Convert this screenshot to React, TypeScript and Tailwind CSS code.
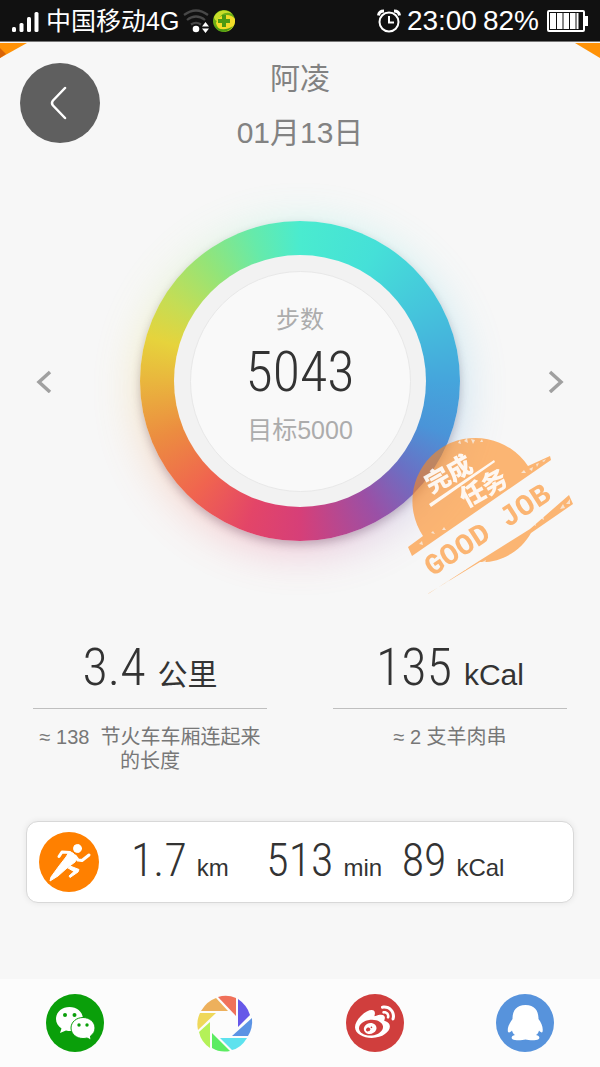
import React from 'react';
import { FaWeibo } from 'react-icons/fa';

const digits = "font-['Roboto_Condensed','Liberation_Sans_Narrow','Roboto',sans-serif] font-light";

const ringColors = [
    '#4aebcf 0deg', '#45e0d8 30deg', '#45c4dc 60deg', '#45a5dc 90deg', '#4a94d8 110deg',
    '#6a70c4 130deg', '#9a50a6 150deg', '#d63f78 180deg', '#e34568 200deg', '#f0644f 223deg',
    '#ec8c40 248deg', '#e9b63d 270deg', '#e6d33c 286deg', '#c4dd55 302deg', '#94e478 322deg',
    '#66eaaa 342deg', '#4aebcf 360deg',
];
const ringStyle = { backgroundImage: `conic-gradient(${ringColors.join(',')})` };

const stats = [
    { value: '3.4', unit: '公里', note: ['≈ 138  节火车车厢连起来', '的长度'] },
    { value: '135', unit: 'kCal', note: ['≈ 2 支羊肉串'] },
];

const StatusBar: React.FC = () => (
    <div className="flex items-center justify-between h-[42px] pl-3 pr-3 bg-[#111] text-white border-b border-[#777]">
        <div className="flex items-center">
            <svg width="28" height="24" viewBox="0 0 28 24" fill="#fff" aria-hidden="true">
                <rect x="0" y="18" width="4" height="5" rx="1.5" />
                <rect x="7.5" y="14" width="4" height="9" rx="1.5" />
                <rect x="15" y="8" width="4" height="15" rx="1.5" />
                <rect x="22.5" y="3" width="4" height="20" rx="1.5" />
            </svg>
            <span className="ml-1.5 text-[25px] leading-8">中国移动4G</span>
            <svg className="ml-1" width="28" height="24" viewBox="0 0 28 24" aria-hidden="true">
                <g fill="none" stroke="#484848" strokeWidth="2.2">
                    <path d="M1 6Q13-3 25 6" />
                    <path d="M4 11Q13 4 22 11" />
                    <path d="M8 15.5Q13 12 18 15.5" />
                </g>
                <circle cx="13" cy="20" r="3.3" fill="#fff" />
                <path d="M19 17.5l3.5-4.5 3.5 4.5zM19 19.5h7l-3.5 4.5z" fill="#fff" />
            </svg>
            <svg className="ml-0.5" width="22" height="22" viewBox="0 0 22 22" aria-hidden="true">
                <circle cx="11" cy="11" r="11" fill="#6cae16" />
                <path d="M1 7C5 -1 15-1 19 4C13 1 7 4 5 12C3 11 1 9 1 7z" fill="#c8de2a" />
                <path d="M3 13C6 3 18 3 22 9C23 17 16 22 11 21C7 21 4 17 3 13z" fill="#f2dc28" />
                <path d="M1 15C5 20 13 21 20 16C16 23 5 24 1 15z" fill="#4e9d14" />
                <path d="M9 5h4v4h4v4h-4v4H9v-4H5V9h4z" fill="#4b9a12" />
            </svg>
        </div>
        <div className="flex items-center text-[28px] leading-8">
            <svg width="24" height="24" viewBox="0 0 24 24" fill="none" stroke="#fff" strokeWidth="2" aria-hidden="true">
                <circle cx="12" cy="13" r="9.5" />
                <path d="M12 7v6.5h5" />
                <path d="M1.5 6.5Q2 2 7 2M22.5 6.5Q22 2 17 2" strokeWidth="3" />
            </svg>
            <span className="ml-1.5">23:00</span>
            <span className="ml-1.5">82%</span>
            <svg className="ml-2" width="41" height="22" viewBox="0 0 41 22" aria-hidden="true">
                <rect x="1" y="1" width="36" height="20" rx="1" fill="none" stroke="#fff" strokeWidth="2" />
                <path d="M3 3h6v16H3zM10 3h5.5v16H10zM16.5 3h5.5v16h-5.5zM23 3h5.5v16H23zM29.5 3h2v16h-2zM38 6h3v10h-3z" fill="#fff" />
            </svg>
        </div>
    </div>
);

const GoodJobStamp: React.FC = () => (
    <svg className="absolute -right-[125px] -bottom-[69px]" width="190" height="180" viewBox="0 0 190 180" role="img" aria-label="完成任务 GOOD JOB">
        <g fill="#ff8a1c" opacity="0.6">
            <path d="M28 106A62 62 0 1 1 133 36L155 26L156 30L17 126L13 117Z" />
            <path d="M33 164L84 131L135 99L174 65L178 74L136 103C126 121 106 133 85 132L34 163Z" />
            <text transform="translate(37 147) rotate(-33)" fontSize="30" fontWeight="700" fontFamily="'Liberation Mono', monospace">GOOD JOB</text>
        </g>
        <g fill="#fff" opacity="0.9" fontFamily="'Noto Sans CJK SC', sans-serif" fontWeight="900">
            <text transform="translate(36 64) rotate(-29)" fontSize="25">完成</text>
            <text transform="translate(71 78) rotate(-29)" fontSize="25">任务</text>
            <path d="M34 74L99 30L100 32L36 77Z" />
        </g>
        {/* worn ink specks */}
        <g fill="#f7f7f7" opacity="0.7">
            <path d="M63 13l2-3 1 4zM69 11l3-3 1 5zM76 9l2 5 2-4zM85 12l2-3 1 3zM126 43l3-3 2 3zM134 39l4-2-1 4zM141 34l3-1-2 4zM147 31l4-2-2 3z" />
            <path d="M24 114l3-3 1 4zM36 103l2-2 2 3zM47 100l2-3 2 3zM137 94l3-2 1 4zM145 88l3-3 1 5zM165 79l3-5 2 4zM171 74l4-5v5zM50 153l5-4-1 4zM67 139l4-3v4zM87 132l4-2-1 4z" />
        </g>
    </svg>
);

const StepRing: React.FC = () => (
    <div className="relative w-80 h-80">
        <div className="absolute inset-0 translate-y-2 rounded-full blur-xl opacity-30" style={ringStyle} />
        <div className="relative grid place-items-center w-80 h-80 rounded-full shadow-[0_4px_8px_rgba(60,30,60,0.25)]" style={ringStyle}>
            <div className="grid place-items-center w-[252px] h-[252px] rounded-full bg-[#f2f2f2]">
                <div className="flex flex-col items-center w-[221px] h-[221px] pt-8 rounded-full bg-[#f9f9f9] border border-[#e8e8e8] text-[#acacac]">
                    <span className="text-2xl leading-8">步数</span>
                    <strong className={`${digits} text-[56px] leading-[72px] text-[#333]`}>5043</strong>
                    <span className="mt-1.5 text-[25px] leading-8">目标5000</span>
                </div>
            </div>
        </div>
        <GoodJobStamp />
    </div>
);

const RunnerIcon: React.FC = () => (
    <svg className="shrink-0" width="60" height="60" viewBox="0 0 60 60" aria-hidden="true">
        <circle cx="30" cy="30" r="30" fill="#ff8000" />
        <g fill="#fff" stroke="#fff" strokeLinejoin="round" strokeLinecap="round">
            <circle cx="38.5" cy="16.5" r="4" />
            <path d="M30 20L34 21L38 26L36 30L28 36L19 44L11 49L12 45L20 34L27 25L30 20Z" />
            <path d="M20 24.5L23 20L31 20.5" fill="none" strokeWidth="3" />
            <path d="M36 24L39 28L43 28.5L50 23" fill="none" strokeWidth="3" />
            <path d="M31 34L40 37.5L39 40L31 45.5L30 44L35 39.5L29 36Z" />
        </g>
    </svg>
);

const WeChatIcon: React.FC = () => (
    <svg width="58" height="58" viewBox="0 0 58 58" aria-hidden="true">
        <circle cx="29" cy="29" r="29" fill="#0a9f0a" />
        <path d="M23.5 13C16 13 10 18 10 25C10 29 12 32 15.5 34.5L14 39L20 36.5C31 39 37 32 37 25C37 18 31 13 23.5 13Z" fill="#fff" />
        <path d="M37 23.5C30.5 23.5 25 28 25 34C25 40 30.5 44.5 37 44.5Q39 44.5 41 44L45 46L44.5 42C47.5 40 49 37 49 34C49 28 43.5 23.5 37 23.5Z" fill="#fff" stroke="#0a9f0a" strokeWidth="1" />
        <g fill="#0a9f0a">
            <circle cx="19" cy="21" r="2" />
            <circle cx="28.5" cy="21" r="2" />
            <circle cx="33" cy="31" r="1.7" />
            <circle cx="41" cy="31" r="1.7" />
        </g>
    </svg>
);

const MomentsIcon: React.FC = () => (
    <svg width="58" height="58" viewBox="0 0 58 58" aria-hidden="true">
        <path d="M22 3Q31 0 40 4V22Z" fill="#f0715a" />
        <path d="M42 5Q51 11 54 21L42 33Z" fill="#6658e8" />
        <path d="M56 24Q57 34 52 42H36Z" fill="#5b93e4" />
        <path d="M51 44Q45 54 36 56L24 44Z" fill="#5de2ee" />
        <path d="M34 57Q24 59 16 54V39Z" fill="#5cec62" />
        <path d="M14 54Q5 48 3 38L14 28Z" fill="#b4f158" />
        <path d="M2 36Q0 27 4 19H20Z" fill="#efd85a" />
        <path d="M5 17Q11 7 20 4L32 17Z" fill="#edb05c" />
    </svg>
);

const QQIcon: React.FC = () => (
    <svg width="58" height="58" viewBox="0 0 58 58" aria-hidden="true">
        <circle cx="29" cy="29" r="29" fill="#5793dc" />
        <path d="M29.5 11C20 11 16.500 17 16.500 25C13.500 29 11 34 12 38C13 39 15 38 16 36.500C16.500 38.500 17.500 40 19 41C14 42 15 46 19 46C23 46.500 27 46 29.500 45.500C32 46 36 46.500 40 46C44 46 45 42 40 41C41.500 40 42.500 38.500 43 36.500C44 38 46 39 46.500 38C47.500 34 45.500 29 42.500 25C42.500 17 39 11 29.500 11Z" fill="#fff" />
    </svg>
);

const Metric: React.FC<{ value: string; unit: string }> = ({ value, unit }) => (
    <p className="flex items-baseline">
        <span className={`${digits} text-[46px] leading-[60px]`}>{value}</span>
        <span className="ml-2.5 text-2xl">{unit}</span>
    </p>
);

const App: React.FC = () => {
    return (
        <div className="flex flex-col min-h-screen bg-[#f7f7f7] font-['Liberation_Sans','Noto_Sans_CJK_SC',sans-serif]">
            <StatusBar />

            <main className="relative flex flex-col grow overflow-hidden">
                {/* Folded corners */}
                <svg className="absolute left-0 top-px" width="27" height="15" viewBox="0 0 27 15" aria-hidden="true">
                    <path d="M0 0H27L0 15Z" fill="#ff9207" />
                    <path d="M0 5L6 11L0 15Z" fill="#d96408" />
                </svg>
                <svg className="absolute right-0 top-px" width="25" height="15" viewBox="0 0 25 15" aria-hidden="true">
                    <path d="M0 0H25V15Z" fill="#ff9207" />
                </svg>

                {/* Header */}
                <header className="grid grid-cols-[80px_1fr_80px] px-5 pt-[21px] text-[#828282]">
                    <button type="button" aria-label="返回" className="grid place-items-center w-20 h-20 rounded-full bg-[#5f5f5f]">
                        <svg width="20" height="36" viewBox="0 0 20 36" fill="none" stroke="#fff" strokeWidth="2.5" strokeLinecap="round" strokeLinejoin="round">
                            <path d="M15 3L3 15.5Q1 18 3 20.5L15 33" />
                        </svg>
                    </button>
                    <div className="text-center text-[30px] leading-8">
                        <h1>阿凌</h1>
                        <p className="mt-[22px]">01月13日</p>
                    </div>
                </header>

                {/* Steps */}
                <section className="flex items-center justify-between px-9 pt-[72px]">
                    <button type="button" aria-label="前一天">
                        <svg width="16" height="24" viewBox="0 0 16 24" fill="none" stroke="#a0a0a0" strokeWidth="3.5">
                            <path d="M14 3L3 13L14 23" />
                        </svg>
                    </button>
                    <StepRing />
                    <button type="button" aria-label="后一天">
                        <svg width="16" height="24" viewBox="0 0 16 24" fill="none" stroke="#a0a0a0" strokeWidth="3.5">
                            <path d="M2 3L13 13L2 23" />
                        </svg>
                    </button>
                </section>

                {/* Distance and calories */}
                <section className="grid grid-cols-2 gap-x-[66px] px-[33px] pt-[90px] text-center text-[#333]">
                    {stats.map((item) => (
                        <div key={item.unit}>
                            <p className="flex items-baseline justify-center h-[78px] border-b border-[#bfbfbf]">
                                <span className={`${digits} text-[52px] leading-[74px]`}>{item.value}</span>
                                <span className="ml-3 text-[30px]">{item.unit}</span>
                            </p>
                            <div className="pt-4 text-xl leading-6 text-[#777] whitespace-pre">
                                {item.note.map((line) => (
                                    <p key={line}>{line}</p>
                                ))}
                            </div>
                        </div>
                    ))}
                </section>

                {/* Running summary */}
                <section className="flex items-center h-[82px] mt-12 mx-[26px] mb-[75px] px-3 rounded-xl bg-white border border-[#d8d8d8] shadow-[0_0_6px_rgba(0,0,0,0.08)] text-[#333]">
                    <RunnerIcon />
                    <div className="grid grid-cols-3 grow ml-8 mr-6 -mt-1">
                        <Metric value="1.7" unit="km" />
                        <Metric value="513" unit="min" />
                        <Metric value="89" unit="kCal" />
                    </div>
                </section>
            </main>

            {/* Share */}
            <footer className="grid grid-cols-4 place-items-center h-[88px] bg-[#fcfcfc]">
                <button type="button" aria-label="微信"><WeChatIcon /></button>
                <button type="button" aria-label="朋友圈"><MomentsIcon /></button>
                <button type="button" aria-label="微博" className="grid place-items-center w-[58px] h-[58px] rounded-full bg-[#d03e3d] text-white">
                    <FaWeibo size={40} />
                </button>
                <button type="button" aria-label="QQ"><QQIcon /></button>
            </footer>
        </div>
    );
};

export default App;
